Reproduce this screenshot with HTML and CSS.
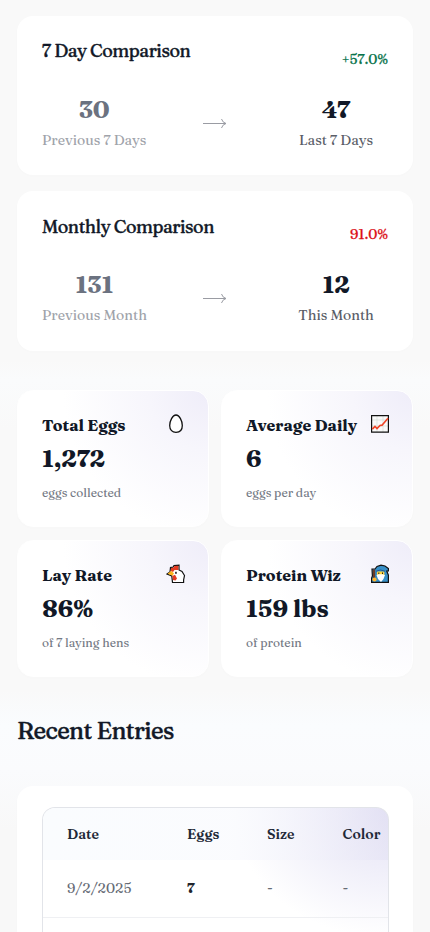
FILE: index.html
```html
<!DOCTYPE html>
<html lang="en">
<head>
<meta charset="utf-8">
<meta name="viewport" content="width=device-width, initial-scale=1">
<title>Egg Dashboard</title>
<link rel="stylesheet" href="styles.css">
</head>
<body>
<main class="page">
  <section class="comparisons">
    <article class="card comparison">
      <header class="comparison-head">
        <h3>7 Day Comparison</h3>
        <span class="change up">+57.0%</span>
      </header>
      <div class="comparison-body">
        <div class="period previous"><strong>30</strong><span>Previous 7 Days</span></div>
        <svg class="arrow" viewBox="0 0 24 12"><path d="M0 6.5H23M18.5 2Q19.5 5.5 23 6.5Q19.5 7.5 18.5 11"/></svg>
        <div class="period current"><strong>47</strong><span>Last 7 Days</span></div>
      </div>
    </article>
    <article class="card comparison">
      <header class="comparison-head">
        <h3>Monthly Comparison</h3>
        <span class="change down">91.0%</span>
      </header>
      <div class="comparison-body">
        <div class="period previous"><strong>131</strong><span>Previous Month</span></div>
        <svg class="arrow" viewBox="0 0 24 12"><path d="M0 6.5H23M18.5 2Q19.5 5.5 23 6.5Q19.5 7.5 18.5 11"/></svg>
        <div class="period current"><strong>12</strong><span>This Month</span></div>
      </div>
    </article>
  </section>

  <section class="stats">
    <article class="card stat">
      <header><h4>Total Eggs</h4>
        <svg class="icon" viewBox="0 0 20 20"><path d="M10 1C6.5 1 3.7 7 3.7 11.5C3.7 16 6.4 18.3 10 18.3S16.3 16 16.3 11.5C16.3 7 13.5 1 10 1Z" fill="#fff" stroke="#111" stroke-width="1.3"/></svg>
      </header>
      <strong>1,272</strong>
      <p>eggs collected</p>
    </article>
    <article class="card stat">
      <header><h4>Average Daily</h4>
        <svg class="icon" viewBox="0 0 20 20"><path d="M1.6 1.6H18.4V18.2H1.6Z" fill="#fafafa"/><path d="M2 6H18M2 12H18M7 2V18M13 2V18" stroke="#d5dcd6" stroke-width=".7"/><path d="M1.6 1.6H18.4V18.2H1.6Z" fill="none" stroke="#111" stroke-width="1.2"/><path d="M2.3 15.2L5 12.5L7 14.5L10 11.5L12 11.2L18 4.2" fill="none" stroke="#ef4528" stroke-width="1.7"/></svg>
      </header>
      <strong>6</strong>
      <p>eggs per day</p>
    </article>
    <article class="card stat">
      <header><h4>Lay Rate</h4>
        <svg class="icon" viewBox="0 0 20 20"><path d="M4 8L4.5 3.5L7 3.2L8 1.5L13 1.2V6L16 7.5L18.5 11.5L17.6 16V18.5H6.5L5.8 12L1.2 10L4 8Z" fill="#fff" stroke="#111" stroke-width="1.2"/><path d="M4.8 7L5 4.1L7.4 3.8L8.4 2.1L12.4 1.8L12.3 6H8.5L7 8Z" fill="#e43b22"/><path d="M1.6 9.8L5 7L8 9.3L6.5 11.7Z" fill="#ffb51b"/><path d="M6.4 12L9 10.8L11 14.5L9.5 16.5L7 16Z" fill="#e43b22"/><rect x="9.2" y="7.8" width="1.5" height="2" fill="#111"/></svg>
      </header>
      <strong>86%</strong>
      <p>of 7 laying hens</p>
    </article>
    <article class="card stat">
      <header><h4>Protein Wiz</h4>
        <svg class="icon" viewBox="0 0 20 20"><path d="M2 5H5L7 2.5L11 1.2L15 2L18.4 4.5V7H16.7L18.4 11V18.4H1.6V14L2.4 12Z" fill="#378fc7" stroke="#111" stroke-width="1.2"/><path d="M2.7 5.6H5.2V14H3Z" fill="#6b3b28"/><path d="M7 7.5H14.3V12H7Z" fill="#ffd23d"/><path d="M6.5 11L9 10.2H12.5L15 11L13.5 15L11 18L8 15Z" fill="#fff"/><path d="M6 7.2Q10.5 4.8 15 7.2" fill="none" stroke="#1e5793"/><path d="M8.8 8.5V10M12.5 8.5V10" stroke="#222"/><circle cx="4.5" cy="15.5" r="2.1" fill="#ffb52c"/></svg>
      </header>
      <strong>159 lbs</strong>
      <p>of protein</p>
    </article>
  </section>

  <h2>Recent Entries</h2>
  <section class="card entries">
    <div class="table-frame">
      <div class="row table-head"><span>Date</span><span>Eggs</span><span>Size</span><span>Color</span></div>
      <div class="row"><span>9/2/2025</span><b>7</b><span>-</span><span>-</span></div>
    </div>
  </section>
</main>
</body>
</html>
```
FILE: styles.css
```css
* { box-sizing: border-box; }
html, body { height: 100%; overflow: hidden; }
body {
  margin: 0;
  background: linear-gradient(#f9f9f9 0, #f9f9f9 360px, #fafbfc 380px, #f9f9f9 430px, #f9f9f9 690px, #fafcfe 725px, #fafbfd 770px, #f8f8f8 830px);
  color: #111827;
  font-family: Fraunces, "Liberation Serif", serif;
}
h2, h3, h4, p { margin: 0; }
.page { padding: 16px 17px 0; }
.card { background: #fff; border-radius: 16px; box-shadow: 0 1px 4px rgba(20, 20, 40, .012); }

.comparisons { display: grid; gap: 16px; }
.comparison { height: 159.25px; padding: 24px 25px; }
.comparison-head { display: flex; justify-content: space-between; height: 52px; }
.comparison h3 { margin-top: .3px; font-size: 18px; line-height: 22px; font-weight: 500; letter-spacing: -.025em; -webkit-text-stroke: .4px currentColor; }
.change { padding-top: 10px; font-size: 14px; line-height: 18px; font-weight: 500; letter-spacing: .1px; -webkit-text-stroke: .25px currentColor; }
.up { color: #08734b; }
.down { color: #dc1018; }
.comparison-body { display: flex; justify-content: space-between; }
.period { display: flex; flex-direction: column; align-items: center; min-width: 104px; white-space: nowrap; }
.period strong { font-size: 24px; line-height: 36px; }
.period span { font-size: 14px; line-height: 25px; }
.previous strong { color: #6b7280; }
.previous span { color: #a0a3aa; }
.current span { color: #5a5e68; }
.arrow { width: 24px; height: 12px; margin-top: 25px; fill: none; stroke: #9a9ca3; stroke-width: 1; }

.stats { display: grid; grid-template-columns: 192px 192px; grid-template-rows: 136.5px 136.5px; gap: 13.5px 12px; margin-top: 39.5px; }
.stat { padding: 21px 22px 0 24px; border: 1px solid #fff; background: radial-gradient(circle at 100% 0, #efedf9 0, #f7f6fc 60px, rgba(255, 255, 255, 0) 145px), #fff; }
.stat header { display: flex; justify-content: space-between; height: 29px; }
.stat h4 { font-size: 16px; line-height: 26px; white-space: nowrap; }
.stat strong { display: block; font-size: 24px; line-height: 36px; }
.stat p { margin-top: 6px; font-size: 12px; line-height: 20px; color: #747984; }
.icon { flex: none; width: 20px; height: 20px; margin-top: 2px; }

h2 { margin-top: 38.5px; font-size: 24px; line-height: 32px; font-weight: 500; letter-spacing: -.025em; -webkit-text-stroke: .5px currentColor; }
.entries { height: 146px; margin-top: 39px; padding: 21px 24px 0 25px; border-radius: 16px 16px 0 0; }
.table-frame { height: 125px; border: 1px solid #e2e4e9; border-bottom: 0; border-radius: 13px 13px 0 0; overflow: hidden; background: radial-gradient(ellipse 155px 130px at 100% 0, #e4e2f4 0, #efeef9 45%, #fff 100%); }
.row { display: grid; grid-template-columns: 120px 80px 75.5px 1fr; height: 58px; padding: 0 0 2px 24px; align-items: center; border-bottom: 1px solid #eff0f3; font-size: 14px; color: #666b75; }
.row b { color: #20242c; }
.table-head { height: 52px; padding-bottom: 0; border: 0; color: #1f2937; font-weight: 600; background: linear-gradient(90deg, #fafcfe 0, rgba(250, 251, 254, .9) 55%, rgba(225, 223, 243, .45) 100%); }
```
